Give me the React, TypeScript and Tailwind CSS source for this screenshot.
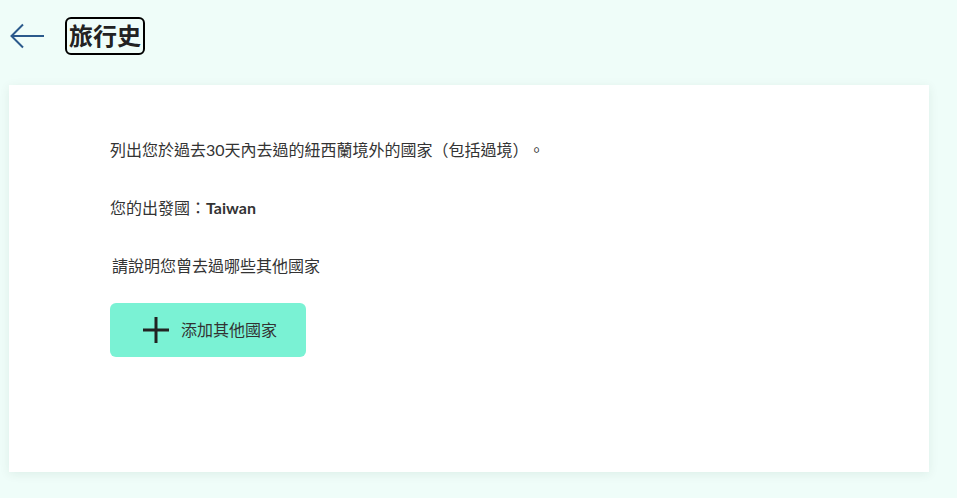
const TravelHistory = () => {
  return (
    <div
      className="min-h-screen h-[498px] bg-[#effdf9] text-[#333] [text-spacing-trim:space-all]"
      style={{ fontFamily: '"Lato", "Noto Sans CJK TC", sans-serif' }}
    >
      {/* Header */}
      <div className="h-[85px] flex items-start pl-[10px] pt-[17px]">
        <button className="h-[38px] w-[34px] flex items-center text-[#2b5a8c]" aria-label="back">
          <svg width="34" height="26" viewBox="0 0 34 26" fill="none" stroke="currentColor" strokeWidth="2">
            <path d="M34 13H2" />
            <path d="M13 1.5 1.5 13 13 24.5" />
          </svg>
        </button>
        <h1 className="ml-[21px] h-[38px] w-[80px] flex items-center justify-center border-2 border-black rounded-[6px] text-[24px] font-bold text-[#222] leading-none">
          旅行史
        </h1>
      </div>

      {/* Card */}
      <div className="ml-[9px] w-[920px] h-[387px] bg-white shadow-[0_2px_10px_rgba(0,60,40,0.08)] pl-[101px] pt-[53px]">
        <p className="text-[16px] leading-[24px] h-[24px]">列出您於過去30天內去過的紐西蘭境外的國家（包括過境）。</p>
        <p className="mt-[34px] text-[16px] leading-[24px] h-[24px]">
          您的出發國：<span className="font-bold">Taiwan</span>
        </p>
        <p className="mt-[34px] ml-[2px] text-[16px] leading-[24px] h-[24px]">請說明您曾去過哪些其他國家</p>
        <button className="mt-[25px] h-[54px] w-[196px] flex items-center rounded-[6px] bg-[#7af2d4] pl-[33px] text-[#333]">
          <svg width="26" height="26" viewBox="0 0 26 26" fill="none" stroke="#222" strokeWidth="3">
            <path d="M13 0v26M0 13h26" />
          </svg>
          <span className="ml-[12px] text-[16px]">添加其他國家</span>
        </button>
      </div>
    </div>
  );
};

export default TravelHistory;
